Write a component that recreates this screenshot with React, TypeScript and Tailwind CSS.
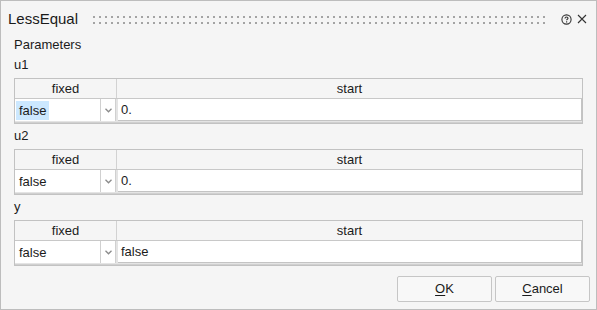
import React from 'react'

interface ParamTableProps {
  label: string
  fixed: string
  start: string
  selected?: boolean
}

const font = { fontFamily: '"Liberation Sans", Arial, sans-serif' }

const Chevron = () => (
  <svg width="7" height="5" viewBox="0 0 7 5">
    <path d="M0.5 0.8 L3.5 3.8 L6.5 0.8" fill="none" stroke="#8a8a8a" strokeWidth="1.3" />
  </svg>
)

const ParamTable: React.FC<ParamTableProps> = ({ label, fixed, start, selected }) => {
  return (
    <div className="flex flex-col">
      <div className="h-[16px] leading-[16px] text-[13px] text-[#1b1b1b]">{label}</div>
      <div className="mt-[5px] border border-[#c2c2c2] bg-[#f5f5f5] flex flex-col">
        <div className="flex h-[20px] border-b border-[#c8c8c8] text-[13px] text-[#1b1b1b] leading-[20px]">
          <div className="w-[102px] text-center border-r border-[#d2d2d2]">fixed</div>
          <div className="flex-1 text-center">start</div>
        </div>
        <div className="flex h-[24px] border-b border-[#d0d0d0] bg-[#e4e4e4] gap-[2px] pb-[1px]">
          <div className="w-[101px] flex bg-white border-r border-[#d0d0d0]">
            <div className="flex-1 flex items-center pl-[1px]">
              <span
                className={
                  'px-[3px] h-[19px] leading-[19px] text-[13px] text-[#1b1b1b] ' +
                  (selected ? 'bg-[#cce8ff]' : '')
                }
              >
                {fixed}
              </span>
            </div>
            <div className="w-[15px] border-l border-[#d0d0d0] flex items-center justify-center">
              <Chevron />
            </div>
          </div>
          <div className="flex-1 bg-white border border-l-0 border-t-0 border-[#c4c4c4] flex items-center pl-[3px] text-[13px] text-[#1b1b1b]">
            {start}
          </div>
        </div>
      </div>
    </div>
  )
}

const App: React.FC = () => {
  return (
    <div style={font} className="w-[597px] h-[310px] bg-[#f5f5f5] border border-[#bdbdbd] flex flex-col">
      <div className="h-[36px] flex items-center pl-[7px] pr-[9px]">
        <span className="text-[15px] text-[#1a1a1a]">LessEqual</span>
        <svg className="flex-1 ml-[14px] mr-[14px]" height="9">
          <defs>
            <pattern id="grip" x="1" y="1" width="6" height="6" patternUnits="userSpaceOnUse">
              <rect x="0" y="0" width="2" height="2" fill="#a4a4a4" />
            </pattern>
          </defs>
          <rect x="0" y="0" width="100%" height="9" fill="url(#grip)" />
        </svg>
        <svg width="11" height="11" viewBox="0 0 11 11" className="mr-[5px]">
          <circle cx="5.5" cy="5.5" r="4.6" fill="none" stroke="#333" strokeWidth="1.1" />
          <path d="M4 4.4 C4 3.4 4.7 3 5.5 3 C6.3 3 7 3.5 7 4.3 C7 5.2 5.6 5.3 5.6 6.3" fill="none" stroke="#333" strokeWidth="1.1" />
          <rect x="5" y="7.3" width="1.2" height="1.2" fill="#333" />
        </svg>
        <svg width="10" height="10" viewBox="0 0 10 10">
          <path d="M1 1 L9 9 M9 1 L1 9" stroke="#333" strokeWidth="1.1" />
        </svg>
      </div>
      <div className="flex flex-col px-[13px]">
        <div className="h-[16px] leading-[16px] text-[13px] text-[#1b1b1b]">Parameters</div>
        <div className="flex flex-col gap-[4px] mt-[4px]">
          <ParamTable label="u1" fixed="false" start="0." selected />
          <ParamTable label="u2" fixed="false" start="0." />
          <ParamTable label="y" fixed="false" start="false" />
        </div>
        <div className="flex justify-end gap-[3px] mt-[10px] -mr-[7px]">
          <button className="w-[95px] h-[26px] border border-[#c6c6c6] rounded-[2px] bg-[#f8f8f8] text-[13px] text-[#1b1b1b]">
            <span className="underline underline-offset-2">O</span>K
          </button>
          <button className="w-[95px] h-[26px] border border-[#c6c6c6] rounded-[2px] bg-[#f8f8f8] text-[13px] text-[#1b1b1b]">
            <span className="underline underline-offset-2">C</span>ancel
          </button>
        </div>
      </div>
    </div>
  )
}

export default App
